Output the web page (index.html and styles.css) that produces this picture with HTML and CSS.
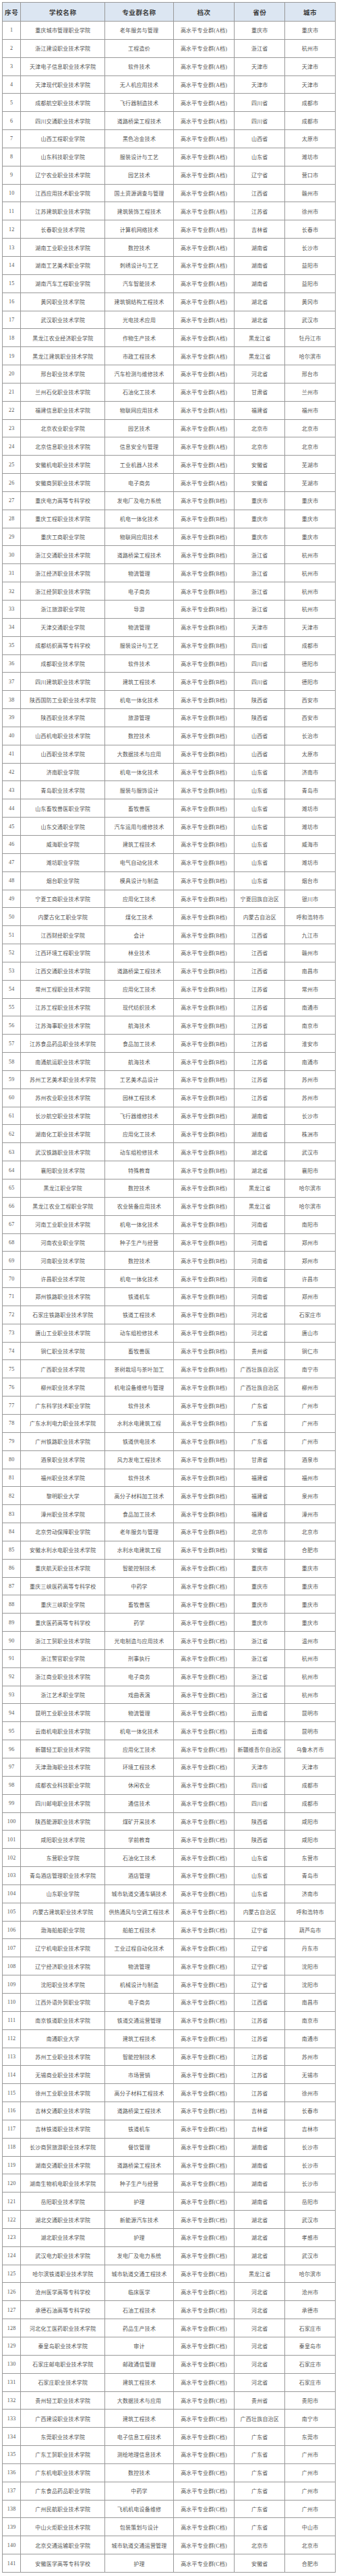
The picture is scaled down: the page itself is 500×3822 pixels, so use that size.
FILE: index.html
```html
<!DOCTYPE html>
<html lang="zh-CN">
<head>
<meta charset="utf-8">
<title>高水平专业群名单</title>
<link rel="stylesheet" href="styles.css">
</head>
<body>
<table class="list">
<colgroup>
<col class="c-no"><col class="c-school"><col class="c-major"><col class="c-level"><col class="c-prov"><col class="c-city">
</colgroup>
<thead>
<tr><th>序号</th><th>学校名称</th><th>专业群名称</th><th>档次</th><th>省份</th><th>城市</th></tr>
</thead>
<tbody>
<tr><td>1</td><td>重庆城市管理职业学院</td><td>老年服务与管理</td><td>高水平专业群(A档)</td><td>重庆市</td><td>重庆市</td></tr>
<tr><td>2</td><td>浙江建设职业技术学院</td><td>工程造价</td><td>高水平专业群(A档)</td><td>浙江省</td><td>杭州市</td></tr>
<tr><td>3</td><td>天津电子信息职业技术学院</td><td>软件技术</td><td>高水平专业群(A档)</td><td>天津市</td><td>天津市</td></tr>
<tr><td>4</td><td>天津现代职业技术学院</td><td>无人机应用技术</td><td>高水平专业群(A档)</td><td>天津市</td><td>天津市</td></tr>
<tr><td>5</td><td>成都航空职业技术学院</td><td>飞行器制造技术</td><td>高水平专业群(A档)</td><td>四川省</td><td>成都市</td></tr>
<tr><td>6</td><td>四川交通职业技术学院</td><td>道路桥梁工程技术</td><td>高水平专业群(A档)</td><td>四川省</td><td>成都市</td></tr>
<tr><td>7</td><td>山西工程职业学院</td><td>黑色冶金技术</td><td>高水平专业群(A档)</td><td>山西省</td><td>太原市</td></tr>
<tr><td>8</td><td>山东科技职业学院</td><td>服装设计与工艺</td><td>高水平专业群(A档)</td><td>山东省</td><td>潍坊市</td></tr>
<tr><td>9</td><td>辽宁农业职业技术学院</td><td>园艺技术</td><td>高水平专业群(A档)</td><td>辽宁省</td><td>营口市</td></tr>
<tr><td>10</td><td>江西应用技术职业学院</td><td>国土资源调查与管理</td><td>高水平专业群(A档)</td><td>江西省</td><td>赣州市</td></tr>
<tr><td>11</td><td>江苏建筑职业技术学院</td><td>建筑装饰工程技术</td><td>高水平专业群(A档)</td><td>江苏省</td><td>徐州市</td></tr>
<tr><td>12</td><td>长春职业技术学院</td><td>计算机网络技术</td><td>高水平专业群(A档)</td><td>吉林省</td><td>长春市</td></tr>
<tr><td>13</td><td>湖南工业职业技术学院</td><td>数控技术</td><td>高水平专业群(A档)</td><td>湖南省</td><td>长沙市</td></tr>
<tr><td>14</td><td>湖南工艺美术职业学院</td><td>刺绣设计与工艺</td><td>高水平专业群(A档)</td><td>湖南省</td><td>益阳市</td></tr>
<tr><td>15</td><td>湖南汽车工程职业学院</td><td>汽车智能技术</td><td>高水平专业群(A档)</td><td>湖南省</td><td>益阳市</td></tr>
<tr><td>16</td><td>黄冈职业技术学院</td><td>建筑钢结构工程技术</td><td>高水平专业群(A档)</td><td>湖北省</td><td>黄冈市</td></tr>
<tr><td>17</td><td>武汉职业技术学院</td><td>光电技术应用</td><td>高水平专业群(A档)</td><td>湖北省</td><td>武汉市</td></tr>
<tr><td>18</td><td>黑龙江农业经济职业学院</td><td>作物生产技术</td><td>高水平专业群(A档)</td><td>黑龙江省</td><td>牡丹江市</td></tr>
<tr><td>19</td><td>黑龙江建筑职业技术学院</td><td>市政工程技术</td><td>高水平专业群(A档)</td><td>黑龙江省</td><td>哈尔滨市</td></tr>
<tr><td>20</td><td>邢台职业技术学院</td><td>汽车检测与维修技术</td><td>高水平专业群(A档)</td><td>河北省</td><td>邢台市</td></tr>
<tr><td>21</td><td>兰州石化职业技术学院</td><td>石油化工技术</td><td>高水平专业群(A档)</td><td>甘肃省</td><td>兰州市</td></tr>
<tr><td>22</td><td>福建信息职业技术学院</td><td>物联网应用技术</td><td>高水平专业群(A档)</td><td>福建省</td><td>福州市</td></tr>
<tr><td>23</td><td>北京农业职业学院</td><td>园艺技术</td><td>高水平专业群(A档)</td><td>北京市</td><td>北京市</td></tr>
<tr><td>24</td><td>北京信息职业技术学院</td><td>信息安全与管理</td><td>高水平专业群(A档)</td><td>北京市</td><td>北京市</td></tr>
<tr><td>25</td><td>安徽机电职业技术学院</td><td>工业机器人技术</td><td>高水平专业群(A档)</td><td>安徽省</td><td>芜湖市</td></tr>
<tr><td>26</td><td>安徽商贸职业技术学院</td><td>电子商务</td><td>高水平专业群(A档)</td><td>安徽省</td><td>芜湖市</td></tr>
<tr><td>27</td><td>重庆电力高等专科学校</td><td>发电厂及电力系统</td><td>高水平专业群(B档)</td><td>重庆市</td><td>重庆市</td></tr>
<tr><td>28</td><td>重庆工程职业技术学院</td><td>机电一体化技术</td><td>高水平专业群(B档)</td><td>重庆市</td><td>重庆市</td></tr>
<tr><td>29</td><td>重庆工商职业学院</td><td>物联网应用技术</td><td>高水平专业群(B档)</td><td>重庆市</td><td>重庆市</td></tr>
<tr><td>30</td><td>浙江交通职业技术学院</td><td>道路桥梁工程技术</td><td>高水平专业群(B档)</td><td>浙江省</td><td>杭州市</td></tr>
<tr><td>31</td><td>浙江经济职业技术学院</td><td>物流管理</td><td>高水平专业群(B档)</td><td>浙江省</td><td>杭州市</td></tr>
<tr><td>32</td><td>浙江经贸职业技术学院</td><td>电子商务</td><td>高水平专业群(B档)</td><td>浙江省</td><td>杭州市</td></tr>
<tr><td>33</td><td>浙江旅游职业学院</td><td>导游</td><td>高水平专业群(B档)</td><td>浙江省</td><td>杭州市</td></tr>
<tr><td>34</td><td>天津交通职业学院</td><td>物流管理</td><td>高水平专业群(B档)</td><td>天津市</td><td>天津市</td></tr>
<tr><td>35</td><td>成都纺织高等专科学校</td><td>服装设计与工艺</td><td>高水平专业群(B档)</td><td>四川省</td><td>成都市</td></tr>
<tr><td>36</td><td>成都职业技术学院</td><td>软件技术</td><td>高水平专业群(B档)</td><td>四川省</td><td>德阳市</td></tr>
<tr><td>37</td><td>四川建筑职业技术学院</td><td>建筑工程技术</td><td>高水平专业群(B档)</td><td>四川省</td><td>德阳市</td></tr>
<tr><td>38</td><td>陕西国防工业职业技术学院</td><td>机电一体化技术</td><td>高水平专业群(B档)</td><td>陕西省</td><td>西安市</td></tr>
<tr><td>39</td><td>陕西职业技术学院</td><td>旅游管理</td><td>高水平专业群(B档)</td><td>陕西省</td><td>西安市</td></tr>
<tr><td>40</td><td>山西机电职业技术学院</td><td>数控技术</td><td>高水平专业群(B档)</td><td>山西省</td><td>长治市</td></tr>
<tr><td>41</td><td>山西职业技术学院</td><td>大数据技术与应用</td><td>高水平专业群(B档)</td><td>山西省</td><td>太原市</td></tr>
<tr><td>42</td><td>济南职业学院</td><td>机电一体化技术</td><td>高水平专业群(B档)</td><td>山东省</td><td>济南市</td></tr>
<tr><td>43</td><td>青岛职业技术学院</td><td>服装与服饰设计</td><td>高水平专业群(B档)</td><td>山东省</td><td>青岛市</td></tr>
<tr><td>44</td><td>山东畜牧兽医职业学院</td><td>畜牧兽医</td><td>高水平专业群(B档)</td><td>山东省</td><td>潍坊市</td></tr>
<tr><td>45</td><td>山东交通职业学院</td><td>汽车运用与维修技术</td><td>高水平专业群(B档)</td><td>山东省</td><td>潍坊市</td></tr>
<tr><td>46</td><td>威海职业学院</td><td>建筑工程技术</td><td>高水平专业群(B档)</td><td>山东省</td><td>威海市</td></tr>
<tr><td>47</td><td>潍坊职业学院</td><td>电气自动化技术</td><td>高水平专业群(B档)</td><td>山东省</td><td>潍坊市</td></tr>
<tr><td>48</td><td>烟台职业学院</td><td>模具设计与制造</td><td>高水平专业群(B档)</td><td>山东省</td><td>烟台市</td></tr>
<tr><td>49</td><td>宁夏工商职业技术学院</td><td>应用化工技术</td><td>高水平专业群(B档)</td><td>宁夏回族自治区</td><td>银川市</td></tr>
<tr><td>50</td><td>内蒙古化工职业学院</td><td>煤化工技术</td><td>高水平专业群(B档)</td><td>内蒙古自治区</td><td>呼和浩特市</td></tr>
<tr><td>51</td><td>江西财经职业学院</td><td>会计</td><td>高水平专业群(B档)</td><td>江西省</td><td>九江市</td></tr>
<tr><td>52</td><td>江西环境工程职业学院</td><td>林业技术</td><td>高水平专业群(B档)</td><td>江西省</td><td>赣州市</td></tr>
<tr><td>53</td><td>江西交通职业技术学院</td><td>道路桥梁工程技术</td><td>高水平专业群(B档)</td><td>江西省</td><td>南昌市</td></tr>
<tr><td>54</td><td>常州工程职业技术学院</td><td>应用化工技术</td><td>高水平专业群(B档)</td><td>江苏省</td><td>常州市</td></tr>
<tr><td>55</td><td>江苏工程职业技术学院</td><td>现代纺织技术</td><td>高水平专业群(B档)</td><td>江苏省</td><td>南通市</td></tr>
<tr><td>56</td><td>江苏海事职业技术学院</td><td>航海技术</td><td>高水平专业群(B档)</td><td>江苏省</td><td>南京市</td></tr>
<tr><td>57</td><td>江苏食品药品职业技术学院</td><td>食品加工技术</td><td>高水平专业群(B档)</td><td>江苏省</td><td>淮安市</td></tr>
<tr><td>58</td><td>南通航运职业技术学院</td><td>航海技术</td><td>高水平专业群(B档)</td><td>江苏省</td><td>南通市</td></tr>
<tr><td>59</td><td>苏州工艺美术职业技术学院</td><td>工艺美术品设计</td><td>高水平专业群(B档)</td><td>江苏省</td><td>苏州市</td></tr>
<tr><td>60</td><td>苏州农业职业技术学院</td><td>园林工程技术</td><td>高水平专业群(B档)</td><td>江苏省</td><td>苏州市</td></tr>
<tr><td>61</td><td>长沙航空职业技术学院</td><td>飞行器维修技术</td><td>高水平专业群(B档)</td><td>湖南省</td><td>长沙市</td></tr>
<tr><td>62</td><td>湖南化工职业技术学院</td><td>应用化工技术</td><td>高水平专业群(B档)</td><td>湖南省</td><td>株洲市</td></tr>
<tr><td>63</td><td>武汉铁路职业技术学院</td><td>动车组检修技术</td><td>高水平专业群(B档)</td><td>湖北省</td><td>武汉市</td></tr>
<tr><td>64</td><td>襄阳职业技术学院</td><td>特殊教育</td><td>高水平专业群(B档)</td><td>湖北省</td><td>襄阳市</td></tr>
<tr><td>65</td><td>黑龙江职业学院</td><td>数控技术</td><td>高水平专业群(B档)</td><td>黑龙江省</td><td>哈尔滨市</td></tr>
<tr><td>66</td><td>黑龙江农业工程职业学院</td><td>农业装备应用技术</td><td>高水平专业群(B档)</td><td>黑龙江省</td><td>哈尔滨市</td></tr>
<tr><td>67</td><td>河南工业职业技术学院</td><td>机电一体化技术</td><td>高水平专业群(B档)</td><td>河南省</td><td>南阳市</td></tr>
<tr><td>68</td><td>河南农业职业学院</td><td>种子生产与经营</td><td>高水平专业群(B档)</td><td>河南省</td><td>郑州市</td></tr>
<tr><td>69</td><td>河南职业技术学院</td><td>数控技术</td><td>高水平专业群(B档)</td><td>河南省</td><td>郑州市</td></tr>
<tr><td>70</td><td>许昌职业技术学院</td><td>机电一体化技术</td><td>高水平专业群(B档)</td><td>河南省</td><td>许昌市</td></tr>
<tr><td>71</td><td>郑州铁路职业技术学院</td><td>铁道机车</td><td>高水平专业群(B档)</td><td>河南省</td><td>郑州市</td></tr>
<tr><td>72</td><td>石家庄铁路职业技术学院</td><td>铁道工程技术</td><td>高水平专业群(B档)</td><td>河北省</td><td>石家庄市</td></tr>
<tr><td>73</td><td>唐山工业职业技术学院</td><td>动车组检修技术</td><td>高水平专业群(B档)</td><td>河北省</td><td>唐山市</td></tr>
<tr><td>74</td><td>铜仁职业技术学院</td><td>畜牧兽医</td><td>高水平专业群(B档)</td><td>贵州省</td><td>铜仁市</td></tr>
<tr><td>75</td><td>广西职业技术学院</td><td>茶树栽培与茶叶加工</td><td>高水平专业群(B档)</td><td>广西壮族自治区</td><td>南宁市</td></tr>
<tr><td>76</td><td>柳州职业技术学院</td><td>机电设备维修与管理</td><td>高水平专业群(B档)</td><td>广西壮族自治区</td><td>柳州市</td></tr>
<tr><td>77</td><td>广东科学技术职业学院</td><td>软件技术</td><td>高水平专业群(B档)</td><td>广东省</td><td>广州市</td></tr>
<tr><td>78</td><td>广东水利电力职业技术学院</td><td>水利水电建筑工程</td><td>高水平专业群(B档)</td><td>广东省</td><td>广州市</td></tr>
<tr><td>79</td><td>广州铁路职业技术学院</td><td>铁道供电技术</td><td>高水平专业群(B档)</td><td>广东省</td><td>广州市</td></tr>
<tr><td>80</td><td>酒泉职业技术学院</td><td>风力发电工程技术</td><td>高水平专业群(B档)</td><td>甘肃省</td><td>酒泉市</td></tr>
<tr><td>81</td><td>福州职业技术学院</td><td>软件技术</td><td>高水平专业群(B档)</td><td>福建省</td><td>福州市</td></tr>
<tr><td>82</td><td>黎明职业大学</td><td>高分子材料加工技术</td><td>高水平专业群(B档)</td><td>福建省</td><td>泉州市</td></tr>
<tr><td>83</td><td>漳州职业技术学院</td><td>食品加工技术</td><td>高水平专业群(B档)</td><td>福建省</td><td>漳州市</td></tr>
<tr><td>84</td><td>北京劳动保障职业学院</td><td>老年服务与管理</td><td>高水平专业群(B档)</td><td>北京市</td><td>北京市</td></tr>
<tr><td>85</td><td>安徽水利水电职业技术学院</td><td>水利水电建筑工程</td><td>高水平专业群(B档)</td><td>安徽省</td><td>合肥市</td></tr>
<tr><td>86</td><td>重庆航天职业技术学院</td><td>智能控制技术</td><td>高水平专业群(C档)</td><td>重庆市</td><td>重庆市</td></tr>
<tr><td>87</td><td>重庆三峡医药高等专科学校</td><td>中药学</td><td>高水平专业群(C档)</td><td>重庆市</td><td>重庆市</td></tr>
<tr><td>88</td><td>重庆三峡职业学院</td><td>畜牧兽医</td><td>高水平专业群(C档)</td><td>重庆市</td><td>重庆市</td></tr>
<tr><td>89</td><td>重庆医药高等专科学校</td><td>药学</td><td>高水平专业群(C档)</td><td>重庆市</td><td>重庆市</td></tr>
<tr><td>90</td><td>浙江工贸职业技术学院</td><td>光电制造与应用技术</td><td>高水平专业群(C档)</td><td>浙江省</td><td>温州市</td></tr>
<tr><td>91</td><td>浙江警官职业学院</td><td>刑事执行</td><td>高水平专业群(C档)</td><td>浙江省</td><td>杭州市</td></tr>
<tr><td>92</td><td>浙江商业职业技术学院</td><td>电子商务</td><td>高水平专业群(C档)</td><td>浙江省</td><td>杭州市</td></tr>
<tr><td>93</td><td>浙江艺术职业学院</td><td>戏曲表演</td><td>高水平专业群(C档)</td><td>浙江省</td><td>杭州市</td></tr>
<tr><td>94</td><td>昆明工业职业技术学院</td><td>物流管理</td><td>高水平专业群(C档)</td><td>云南省</td><td>昆明市</td></tr>
<tr><td>95</td><td>云南机电职业技术学院</td><td>机电一体化技术</td><td>高水平专业群(C档)</td><td>云南省</td><td>昆明市</td></tr>
<tr><td>96</td><td>新疆轻工职业技术学院</td><td>应用化工技术</td><td>高水平专业群(C档)</td><td>新疆维吾尔自治区</td><td>乌鲁木齐市</td></tr>
<tr><td>97</td><td>天津渤海职业技术学院</td><td>环境工程技术</td><td>高水平专业群(C档)</td><td>天津市</td><td>天津市</td></tr>
<tr><td>98</td><td>成都农业科技职业学院</td><td>休闲农业</td><td>高水平专业群(C档)</td><td>四川省</td><td>成都市</td></tr>
<tr><td>99</td><td>四川邮电职业技术学院</td><td>通信技术</td><td>高水平专业群(C档)</td><td>四川省</td><td>成都市</td></tr>
<tr><td>100</td><td>陕西能源职业技术学院</td><td>煤矿开采技术</td><td>高水平专业群(C档)</td><td>陕西省</td><td>咸阳市</td></tr>
<tr><td>101</td><td>咸阳职业技术学院</td><td>学前教育</td><td>高水平专业群(C档)</td><td>陕西省</td><td>咸阳市</td></tr>
<tr><td>102</td><td>东营职业学院</td><td>石油化工技术</td><td>高水平专业群(C档)</td><td>山东省</td><td>东营市</td></tr>
<tr><td>103</td><td>青岛酒店管理职业技术学院</td><td>酒店管理</td><td>高水平专业群(C档)</td><td>山东省</td><td>青岛市</td></tr>
<tr><td>104</td><td>山东职业学院</td><td>城市轨道交通车辆技术</td><td>高水平专业群(C档)</td><td>山东省</td><td>济南市</td></tr>
<tr><td>105</td><td>内蒙古建筑职业技术学院</td><td>供热通风与空调工程技术</td><td>高水平专业群(C档)</td><td>内蒙古自治区</td><td>呼和浩特市</td></tr>
<tr><td>106</td><td>渤海船舶职业学院</td><td>船舶工程技术</td><td>高水平专业群(C档)</td><td>辽宁省</td><td>葫芦岛市</td></tr>
<tr><td>107</td><td>辽宁机电职业技术学院</td><td>工业过程自动化技术</td><td>高水平专业群(C档)</td><td>辽宁省</td><td>丹东市</td></tr>
<tr><td>108</td><td>辽宁经济职业技术学院</td><td>物流管理</td><td>高水平专业群(C档)</td><td>辽宁省</td><td>沈阳市</td></tr>
<tr><td>109</td><td>沈阳职业技术学院</td><td>机械设计与制造</td><td>高水平专业群(C档)</td><td>辽宁省</td><td>沈阳市</td></tr>
<tr><td>110</td><td>江西外语外贸职业学院</td><td>电子商务</td><td>高水平专业群(C档)</td><td>江西省</td><td>南昌市</td></tr>
<tr><td>111</td><td>南京铁道职业技术学院</td><td>铁道交通运营管理</td><td>高水平专业群(C档)</td><td>江苏省</td><td>南京市</td></tr>
<tr><td>112</td><td>南通职业大学</td><td>建筑工程技术</td><td>高水平专业群(C档)</td><td>江苏省</td><td>南通市</td></tr>
<tr><td>113</td><td>苏州工业职业技术学院</td><td>智能控制技术</td><td>高水平专业群(C档)</td><td>江苏省</td><td>苏州市</td></tr>
<tr><td>114</td><td>无锡商业职业技术学院</td><td>市场营销</td><td>高水平专业群(C档)</td><td>江苏省</td><td>无锡市</td></tr>
<tr><td>115</td><td>徐州工业职业技术学院</td><td>高分子材料工程技术</td><td>高水平专业群(C档)</td><td>江苏省</td><td>徐州市</td></tr>
<tr><td>116</td><td>吉林交通职业技术学院</td><td>道路桥梁工程技术</td><td>高水平专业群(C档)</td><td>吉林省</td><td>长春市</td></tr>
<tr><td>117</td><td>吉林铁道职业技术学院</td><td>铁道机车</td><td>高水平专业群(C档)</td><td>吉林省</td><td>吉林市</td></tr>
<tr><td>118</td><td>长沙商贸旅游职业技术学院</td><td>餐饮管理</td><td>高水平专业群(C档)</td><td>湖南省</td><td>长沙市</td></tr>
<tr><td>119</td><td>湖南交通职业技术学院</td><td>道路桥梁工程技术</td><td>高水平专业群(C档)</td><td>湖南省</td><td>长沙市</td></tr>
<tr><td>120</td><td>湖南生物机电职业技术学院</td><td>种子生产与经营</td><td>高水平专业群(C档)</td><td>湖南省</td><td>长沙市</td></tr>
<tr><td>121</td><td>岳阳职业技术学院</td><td>护理</td><td>高水平专业群(C档)</td><td>湖南省</td><td>岳阳市</td></tr>
<tr><td>122</td><td>湖北交通职业技术学院</td><td>新能源汽车技术</td><td>高水平专业群(C档)</td><td>湖北省</td><td>武汉市</td></tr>
<tr><td>123</td><td>湖北职业技术学院</td><td>护理</td><td>高水平专业群(C档)</td><td>湖北省</td><td>孝感市</td></tr>
<tr><td>124</td><td>武汉电力职业技术学院</td><td>发电厂及电力系统</td><td>高水平专业群(C档)</td><td>湖北省</td><td>武汉市</td></tr>
<tr><td>125</td><td>哈尔滨铁道职业技术学院</td><td>城市轨道交通工程技术</td><td>高水平专业群(C档)</td><td>黑龙江省</td><td>哈尔滨市</td></tr>
<tr><td>126</td><td>沧州医学高等专科学校</td><td>临床医学</td><td>高水平专业群(C档)</td><td>河北省</td><td>沧州市</td></tr>
<tr><td>127</td><td>承德石油高等专科学校</td><td>石油工程技术</td><td>高水平专业群(C档)</td><td>河北省</td><td>承德市</td></tr>
<tr><td>128</td><td>河北化工医药职业技术学院</td><td>药品生产技术</td><td>高水平专业群(C档)</td><td>河北省</td><td>石家庄市</td></tr>
<tr><td>129</td><td>秦皇岛职业技术学院</td><td>审计</td><td>高水平专业群(C档)</td><td>河北省</td><td>秦皇岛市</td></tr>
<tr><td>130</td><td>石家庄邮电职业技术学院</td><td>邮政通信管理</td><td>高水平专业群(C档)</td><td>河北省</td><td>石家庄市</td></tr>
<tr><td>131</td><td>石家庄职业技术学院</td><td>建筑工程技术</td><td>高水平专业群(C档)</td><td>河北省</td><td>石家庄市</td></tr>
<tr><td>132</td><td>贵州轻工职业技术学院</td><td>大数据技术与应用</td><td>高水平专业群(C档)</td><td>贵州省</td><td>贵阳市</td></tr>
<tr><td>133</td><td>广西建设职业技术学院</td><td>建筑工程技术</td><td>高水平专业群(C档)</td><td>广西壮族自治区</td><td>南宁市</td></tr>
<tr><td>134</td><td>东莞职业技术学院</td><td>电子信息工程技术</td><td>高水平专业群(C档)</td><td>广东省</td><td>东莞市</td></tr>
<tr><td>135</td><td>广东工贸职业技术学院</td><td>测绘地理信息技术</td><td>高水平专业群(C档)</td><td>广东省</td><td>广州市</td></tr>
<tr><td>136</td><td>广东机电职业技术学院</td><td>数控技术</td><td>高水平专业群(C档)</td><td>广东省</td><td>广州市</td></tr>
<tr><td>137</td><td>广东食品药品职业学院</td><td>中药学</td><td>高水平专业群(C档)</td><td>广东省</td><td>广州市</td></tr>
<tr><td>138</td><td>广州民航职业技术学院</td><td>飞机机电设备维修</td><td>高水平专业群(C档)</td><td>广东省</td><td>广州市</td></tr>
<tr><td>139</td><td>中山火炬职业技术学院</td><td>包装策划与设计</td><td>高水平专业群(C档)</td><td>广东省</td><td>中山市</td></tr>
<tr><td>140</td><td>北京交通运输职业学院</td><td>城市轨道交通运营管理</td><td>高水平专业群(C档)</td><td>北京市</td><td>北京市</td></tr>
<tr><td>141</td><td>安徽医学高等专科学校</td><td>护理</td><td>高水平专业群(C档)</td><td>安徽省</td><td>合肥市</td></tr>
</tbody>
</table>
</body>
</html>
```

FILE: styles.css
```css
html, body {
  margin: 0;
  padding: 0;
  background: #ffffff;
}

body {
  padding: 3px 0 0 3px;
  font-family: "Liberation Serif", "Noto Sans CJK SC", serif;
}

.list {
  border-collapse: collapse;
  table-layout: fixed;
  width: 494px;
}

.c-no { width: 27.3px; }
.c-school { width: 125px; }
.c-major { width: 101.4px; }
.c-level { width: 90.6px; }
.c-prov { width: 75px; }
.c-city { width: 74.7px; }

.list th,
.list td {
  border: 1px solid #999999;
  padding: 0;
  text-align: center;
  vertical-align: middle;
  white-space: nowrap;
  overflow: hidden;
}

.list thead tr {
  height: 28px;
}

.list th {
  background: #dce6f2;
  color: #3a3a3a;
  font-size: 9.6px;
  font-weight: 700;
  letter-spacing: 0.5px;
}

.list tbody tr {
  height: 26.856px;
}

.list td {
  color: #555555;
  font-size: 8px;
  font-weight: 400;
  letter-spacing: 0.2px;
}
```
